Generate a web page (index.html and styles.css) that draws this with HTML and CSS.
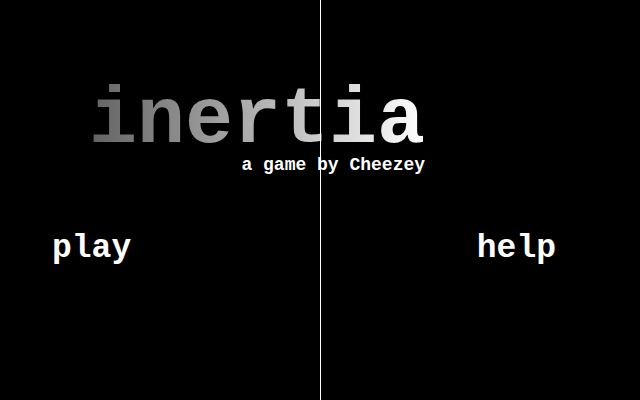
FILE: index.html
```html
<!DOCTYPE html>
<html>
<head>
<meta charset="utf-8">
<link rel="stylesheet" href="styles.css">
</head>
<body>
<div class="screen">
  <div class="brand">
    <div class="title">inertia</div>
    <div class="byline">a game by Cheezey</div>
  </div>
  <div class="menu">
    <div class="item">play</div>
    <div class="item">help</div>
  </div>
  <div class="divider"></div>
</div>
</body>
</html>
```
FILE: styles.css
```css
html, body {
  margin: 0;
  padding: 0;
  background: #000;
}
.screen {
  position: relative;
  width: 640px;
  height: 400px;
  background: #000;
  overflow: hidden;
  font-family: "Liberation Mono", "Courier New", monospace;
  font-weight: bold;
  color: #fff;
}
.brand {
  display: inline-flex;
  flex-direction: column;
  align-items: flex-end;
  margin-left: 89px;
  padding-top: 81px;
}
.title {
  font-size: 80px;
  line-height: 80px;
  background: linear-gradient(to right, #626262, #ffffff);
  -webkit-background-clip: text;
  background-clip: text;
  color: transparent;
}
.byline {
  font-size: 18px;
  line-height: 20px;
  margin-top: -6px;
}
.menu {
  display: flex;
  justify-content: space-between;
  padding: 56px 84px 0 52px;
}
.item {
  font-size: 33px;
  line-height: 36px;
}
.divider {
  position: absolute;
  left: 320px;
  top: 0;
  width: 1px;
  height: 400px;
  background: #fff;
}
```
